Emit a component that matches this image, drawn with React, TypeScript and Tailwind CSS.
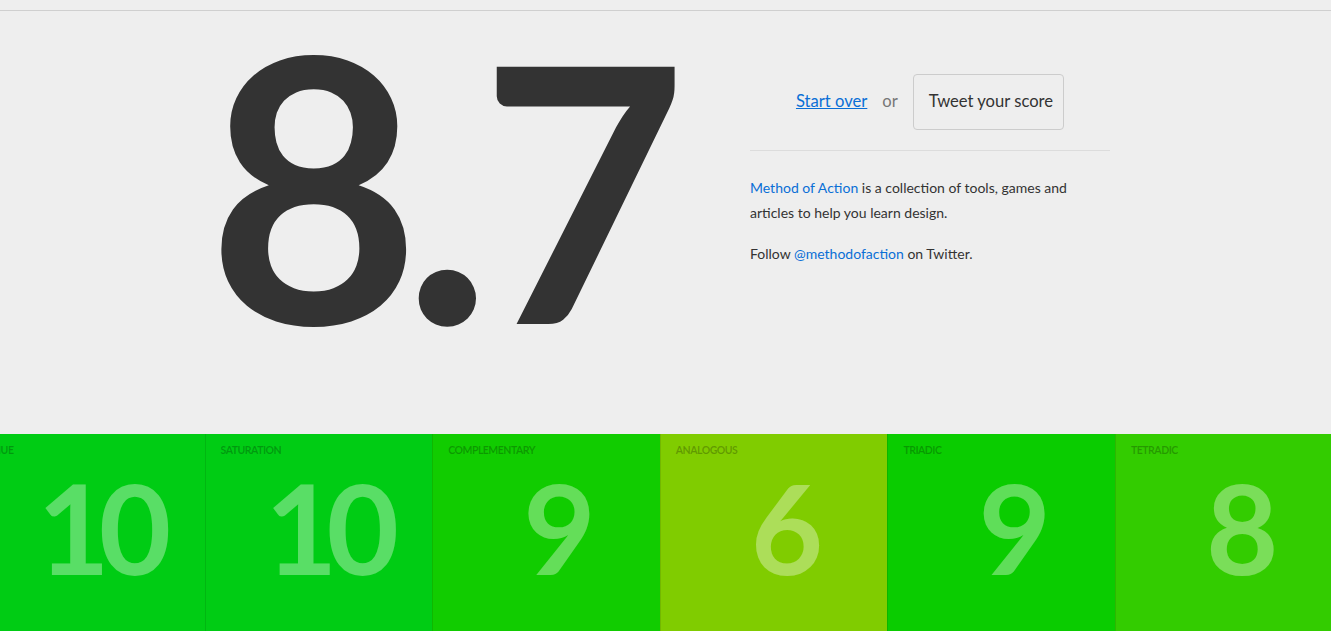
import React from "react";

const tiles = [
  { label: "Hue", score: 10, bg: "bg-[#00cc14]" },
  { label: "Saturation", score: 10, bg: "bg-[#00cc14]" },
  { label: "Complementary", score: 9, bg: "bg-[#11cc00]" },
  { label: "Analogous", score: 6, bg: "bg-[#80cc00]" },
  { label: "Triadic", score: 9, bg: "bg-[#0acc00]" },
  { label: "Tetradic", score: 8, bg: "bg-[#33cc00]" },
];

export default function App() {
  return (
    <div className="w-[1331px] h-[631px] overflow-hidden bg-[#eeeeee] text-[#333] font-['Lato','Open_Sans',sans-serif]">
      <div className="h-[11px] border-b border-[#cfcfcf]" />
      <main className="h-[423px] flex">
        <div className="w-[750px] shrink-0 pl-[207px]">
          <div className="flex items-baseline leading-none font-bold mt-[-22px]">
            <span className="text-[368px]">8</span>
            <span className="text-[378px] ml-[-18px]">.</span>
            <span className="text-[356px] ml-[-12px]">7</span>
          </div>
        </div>
        <div className="w-[360px] pt-[62px]">
          <div className="flex items-center justify-center h-[57px] text-[16.6px]">
            <a href="#" className="text-[#0a6fd6] underline">Start over</a>
            <span className="mx-[15px] text-[#777]">or</span>
            <button className="h-[56px] pl-[15px] pr-[10px] border border-[#cccccc] rounded-[4px] bg-[#eeeeee] text-[#333]">
              Tweet your score
            </button>
          </div>
          <div className="mt-[20px] border-t border-[#dcdcdc]" />
          <p className="mt-[24px] text-[14px] leading-[25px]">
            <a href="#" className="text-[#0a6fd6]">Method of Action</a> is a collection of tools, games and articles to help you learn design.
          </p>
          <p className="mt-[16px] text-[14px] leading-[25px]">
            Follow <a href="#" className="text-[#0a6fd6]">@methodofaction</a> on Twitter.
          </p>
        </div>
      </main>
      <section className="flex ml-[-23px] h-[200px]">
        {tiles.map((t) => (
          <div key={t.label} className={`${t.bg} w-[227.6px] shrink-0 border-l border-black/10 pt-[9px]`}>
            <div className="px-[15px] text-[10.5px] font-bold uppercase tracking-[-0.5px] text-black/25 leading-[15px]">
              {t.label}
            </div>
            <div className="pl-[15px] text-center text-[125px] leading-none font-bold tracking-[-11px] text-white/35 mt-[7px]">
              {t.score}
            </div>
          </div>
        ))}
      </section>
    </div>
  );
}
